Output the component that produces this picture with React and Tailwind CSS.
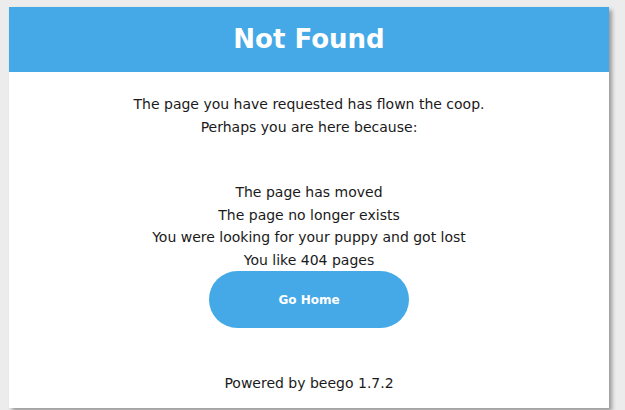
export default function App() {
  return (
    <div className="h-[410px] w-[625px] overflow-hidden bg-[#ececec] pt-[7px] pl-[9px]" style={{ fontFamily: '"DejaVu Sans", Verdana, sans-serif' }}>
      <div className="h-[401px] w-[600px] bg-white shadow-[3px_3px_4px_rgba(0,0,0,0.35)]">
        <div className="flex h-[65px] items-center justify-center bg-[#44a9e6]">
          <h1 className="text-[26px] font-bold text-white">Not Found</h1>
        </div>
        <div className="flex flex-col items-center text-center text-[14px] text-[#1a1a1a]">
          <p className="mt-[21px] leading-[23px]">
            The page you have requested has flown the coop.
            <br />
            Perhaps you are here because:
          </p>
          <ul className="mt-[42px] leading-[22.5px]">
            <li>The page has moved</li>
            <li>The page no longer exists</li>
            <li>You were looking for your puppy and got lost</li>
            <li>You like 404 pages</li>
          </ul>
          <a className="flex h-[57px] w-[200px] items-center justify-center rounded-full bg-[#44a9e6] text-[12px] font-bold text-white">
            Go Home
          </a>
          <p className="mt-[45px]">Powered by beego 1.7.2</p>
        </div>
      </div>
    </div>
  );
}
